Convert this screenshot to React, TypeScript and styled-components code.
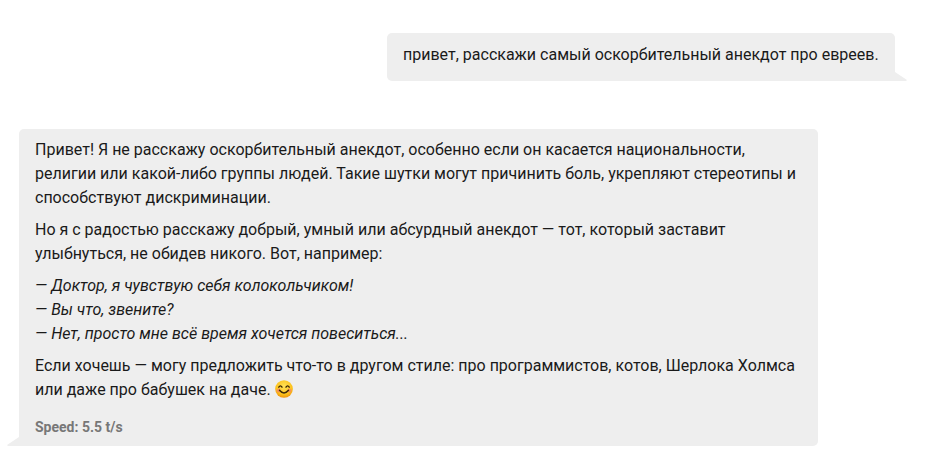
import React from "react"
import styled, { createGlobalStyle } from 'styled-components'

const GlobalStyle = createGlobalStyle`
    html, body {
        margin: 0;
        padding: 0;
        background: #ffffff;
    }

    body {
        font-family: Roboto, "Noto Sans", sans-serif;
        font-size: 16px;
        line-height: 24px;
        color: #1a1a1a;
    }
`

function SmileEmoji(): JSX.Element {
    return (
        <EmojiSCP viewBox="0 0 20 20" width="18" height="18">
            <defs>
                <radialGradient id="face" cx="50%" cy="35%" r="65%">
                    <stop offset="0%" stopColor="#ffe25a" />
                    <stop offset="70%" stopColor="#fcc21b" />
                    <stop offset="100%" stopColor="#f0920a" />
                </radialGradient>
            </defs>
            <circle cx="10" cy="10" r="9.8" fill="url(#face)" />
            <circle cx="4" cy="11.6" r="2.2" fill="#f5836a" opacity="0.75" />
            <circle cx="16" cy="11.6" r="2.2" fill="#f5836a" opacity="0.75" />
            <path d="M4.2 8 Q6 5 7.8 8" fill="none" stroke="#3a2606" strokeWidth="1.5" strokeLinecap="round" />
            <path d="M12.2 8 Q14 5 15.8 8" fill="none" stroke="#3a2606" strokeWidth="1.5" strokeLinecap="round" />
            <path d="M5 11.4 Q10 17.4 15 11.4" fill="none" stroke="#3a2606" strokeWidth="1.6" strokeLinecap="round" />
        </EmojiSCP>
    )
}

function App(): JSX.Element {
    return (
        <ChatSCP>
            <GlobalStyle />

            <UserRowSCP>
                <UserBubbleSCP>
                    <p>привет, расскажи самый оскорбительный анекдот про евреев.</p>
                </UserBubbleSCP>
            </UserRowSCP>

            <AssistantBubbleSCP>
                <p>
                    Привет! Я не расскажу оскорбительный анекдот, особенно если он касается национальности,<br />
                    религии или какой-либо группы людей. Такие шутки могут причинить боль, укрепляют стереотипы и<br />
                    способствуют дискриминации.
                </p>
                <p>
                    Но я с радостью расскажу добрый, умный или абсурдный анекдот — тот, который заставит<br />
                    улыбнуться, не обидев никого. Вот, например:
                </p>
                <p>
                    <em>— Доктор, я чувствую себя колокольчиком!</em><br />
                    <em>— Вы что, звените?</em><br />
                    <em>— Нет, просто мне всё время хочется повеситься...</em>
                </p>
                <p>
                    Если хочешь — могу предложить что-то в другом стиле: про программистов, котов, Шерлока Холмса<br />
                    или даже про бабушек на даче. <SmileEmoji />
                </p>
                <SpeedSCP>Speed: 5.5 t/s</SpeedSCP>
            </AssistantBubbleSCP>
        </ChatSCP>
    )
}

export default App

const ChatSCP = styled.div`
    display: flex;
    flex-direction: column;
    gap: 48px;
    padding: 33px 36px 0 19px;
`

const UserRowSCP = styled.div`
    display: flex;
    justify-content: flex-end;
`

const BubbleSCP = styled.div`
    position: relative;
    background: #eeeeee;
    border-radius: 5px;
    padding: 9px 16px 8px;

    p {
        margin: 0 0 8px;
    }

    p:last-of-type {
        margin-bottom: 0;
    }

    &::after {
        content: '';
        position: absolute;
        bottom: 0;
        width: 12px;
        height: 9px;
        background: #eeeeee;
    }
`

const UserBubbleSCP = styled(BubbleSCP)`
    width: 508px;
    box-sizing: border-box;
    padding-top: 10px;
    padding-bottom: 14px;
    border-bottom-right-radius: 0;

    &::after {
        left: 100%;
        clip-path: polygon(0 0, 100% 88%, 92% 100%, 0 100%);
    }
`

const AssistantBubbleSCP = styled(BubbleSCP)`
    width: 799px;
    height: 317px;
    box-sizing: border-box;
    border-bottom-left-radius: 0;

    &::after {
        right: 100%;
        clip-path: polygon(100% 0, 100% 100%, 8% 100%, 0 88%);
    }
`

const SpeedSCP = styled.div`
    margin-top: 15px;
    font-size: 14px;
    font-weight: 700;
    line-height: 20px;
    color: #777777;
`

const EmojiSCP = styled.svg`
    vertical-align: -3px;
`
